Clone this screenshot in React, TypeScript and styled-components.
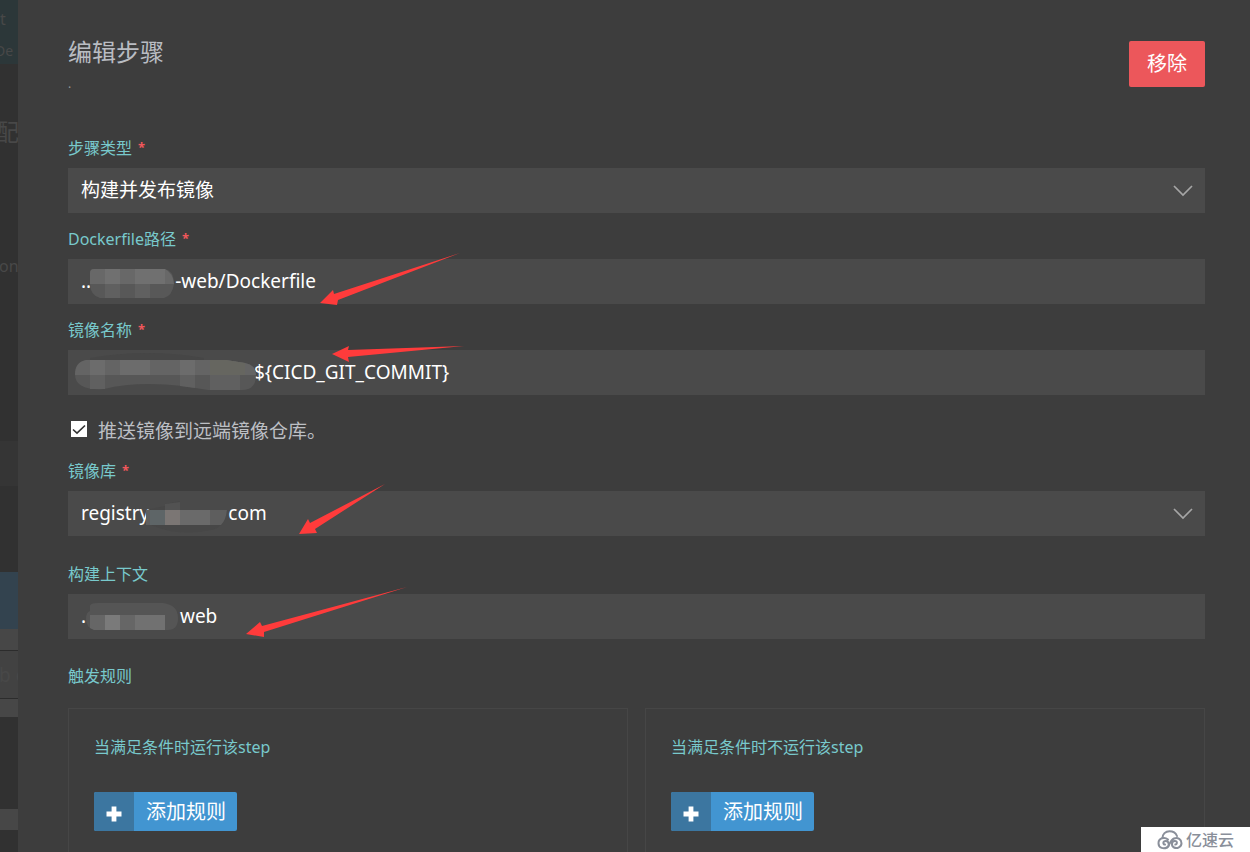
import React from "react";
import styled, { createGlobalStyle } from "styled-components";

const GlobalStyle = createGlobalStyle`
  *, *::before, *::after { box-sizing: border-box; }
  body {
    margin: 0;
    background: #313131;
    color: #fff;
    font-family: "Noto Sans", "Noto Sans CJK SC", sans-serif;
    font-size: 19px;
  }
  button, input, select { font: inherit; color: inherit; }
`;

const Page = styled.div`
  display: flex;
  height: 100vh;
  overflow: hidden;
`;

/* The dimmed page that stays visible beside the drawer */
const Underlay = styled.div`
  flex: 0 0 18px;
  display: flex;
  flex-direction: column;
  overflow: hidden;
  white-space: nowrap;
  background: #313131;
  color: #484848;
`;

const Strip = styled.div<{ $height: number; $tone?: string; $size?: number; $pull?: number; $ruled?: boolean }>`
  flex: 0 0 ${(p) => p.$height}px;
  display: flex;
  align-items: center;
  background: ${(p) => p.$tone ?? "transparent"};
  font-size: ${(p) => p.$size ?? 16}px;
  line-height: 24px;
  text-indent: ${(p) => -(p.$pull ?? 0)}px;
  border-bottom: ${(p) => (p.$ruled ? "1px solid #2c2c2c" : "0")};
`;

const Drawer = styled.main`
  flex: 1;
  min-width: 0;
  padding: 36px 45px 0 50px;
  background: #3d3d3d;
`;

const Header = styled.header`
  display: flex;
  justify-content: space-between;
  align-items: flex-start;
  height: 102px;
`;

const Title = styled.h1`
  margin: 0;
  color: #b9bcc2;
  font-size: 24px;
  font-weight: 400;
  line-height: 32px;
`;

const Subtitle = styled.p`
  margin: 4px 0 0;
  color: #999;
  font-size: 12px;
  line-height: 24px;
`;

const RemoveButton = styled.button`
  margin-top: 5px;
  width: 76px;
  height: 46px;
  padding: 0 0 4px;
  border: 0;
  border-radius: 2px;
  background: #ec575b;
  font-size: 20px;
`;

const Group = styled.div<{ $after?: number }>`
  display: flex;
  flex-direction: column;
  gap: 10px;
  margin-bottom: ${(p) => p.$after ?? 16}px;
`;

const Label = styled.label`
  align-self: flex-start;
  color: #78c9cc;
  font-size: 16px;
  line-height: 20px;
`;

const Required = styled.span`
  display: inline-block;
  margin-left: 6px;
  color: #f0575b;
  font-size: 13px;
  font-weight: 700;
  line-height: 18px;
  vertical-align: top;
`;

const Field = styled.div`
  position: relative;
  height: 45px;
  background: #4a4a4a;
`;

const TextInput = styled.input`
  display: block;
  width: 100%;
  height: 100%;
  padding: 0 13px 2px;
  border: 0;
  outline: 0;
  background: transparent;
`;

const Select = styled.select`
  appearance: none;
  display: block;
  width: 100%;
  height: 100%;
  padding: 0 48px 1px 13px;
  border: 0;
  outline: 0;
  background: transparent;
`;

const Chevron = styled.svg`
  position: absolute;
  top: 16px;
  right: 12px;
  pointer-events: none;
`;

const Marks = styled.svg`
  position: absolute;
  top: -10px;
  left: 0;
  overflow: visible;
  pointer-events: none;
`;

const CheckRow = styled.label`
  display: flex;
  align-items: center;
  gap: 11px;
  margin: 24px 0 18px 3px;
  color: #bcbfc4;
  line-height: 24px;
`;

const CheckBox = styled.input`
  appearance: none;
  width: 16px;
  height: 16px;
  margin: 0 0 4px;
  background: #fff
    url("data:image/svg+xml,%3Csvg xmlns='http://www.w3.org/2000/svg' viewBox='0 0 16 16'%3E%3Cpath d='M2 8.5 6 12.2 14 4.5' fill='none' stroke='%23333' stroke-width='1.6'/%3E%3C/svg%3E");
`;

const SectionTitle = styled.h2`
  margin: 0 0 22px;
  color: #78c9cc;
  font-size: 16px;
  font-weight: 400;
  line-height: 20px;
`;

const Rules = styled.div`
  display: grid;
  grid-template-columns: 1fr 1fr;
  gap: 17px;
`;

const RuleCard = styled.section`
  min-height: 190px;
  padding: 28px 25px;
  border: 1px solid #464646;
`;

const RuleTitle = styled.h3`
  margin: 0 0 35px;
  color: #78c9cc;
  font-size: 16px;
  font-weight: 400;
  line-height: 20px;
`;

const AddButton = styled.button`
  display: flex;
  height: 39px;
  padding: 0;
  overflow: hidden;
  border: 0;
  border-radius: 2px;
  background: #4295d1;
  font-size: 20px;
  line-height: 39px;
`;

const AddIcon = styled.span`
  display: flex;
  align-items: center;
  justify-content: center;
  width: 40px;
  height: 39px;
  padding-top: 5px;
  background: #3c76a0;
`;

const AddText = styled.span`
  padding: 0 11px 0 12px;
`;

const Brand = styled.aside`
  position: fixed;
  right: 0;
  bottom: 0;
  display: flex;
  align-items: center;
  justify-content: center;
  gap: 3px;
  width: 109px;
  height: 25px;
  background: #fff;
  color: #8a8f9a;
  font-size: 16px;
  font-weight: 500;
  line-height: 24px;
`;

const gap = (n: number) => "\u00a0".repeat(n);

const Arrow = ({ d }: { d: string }) => <path d={d} fill="#ff3b3b" />;

function DropIcon() {
  return (
    <Chevron width="20" height="14" viewBox="0 0 20 14" fill="none" stroke="#a6a6a6" strokeWidth="1.7">
      <path d="M1 2 10 11 19 2" />
    </Chevron>
  );
}

type FieldProps = {
  id: string;
  label: string;
  required?: boolean;
  after?: number;
  children: React.ReactNode;
};

function FormGroup({ id, label, required, after, children }: FieldProps) {
  return (
    <Group $after={after}>
      <Label htmlFor={id}>
        {label}
        {required && <Required>*</Required>}
      </Label>
      <Field>{children}</Field>
    </Group>
  );
}

function Rule({ title }: { title: string }) {
  return (
    <RuleCard>
      <RuleTitle>{title}</RuleTitle>
      <AddButton type="button">
        <AddIcon>
          <svg width="16" height="16" viewBox="0 0 16 16" fill="#fff">
            <path d="M5.6.5h4.8v5.1h5.1v4.8h-5.1v5.1H5.6v-5.1H.5V5.6h5.1z" />
          </svg>
        </AddIcon>
        <AddText>添加规则</AddText>
      </AddButton>
    </RuleCard>
  );
}

export default function App() {
  return (
    <>
      <GlobalStyle />
      <Page>
        <Underlay aria-hidden="true">
          <Strip $height={37} $tone="#2c3739">t</Strip>
          <Strip $height={27} $tone="#2c3739" $size={14} $pull={5}>De</Strip>
          <Strip $height={50} />
          <Strip $height={36} $size={24} $pull={5}>配</Strip>
          <Strip $height={104} />
          <Strip $height={24} $pull={1}>on</Strip>
          <Strip $height={163} />
          <Strip $height={45} $tone="#353535" />
          <Strip $height={86} />
          <Strip $height={57} $tone="#33434f" />
          <Strip $height={22} $tone="#474747" $ruled />
          <Strip $height={48} $tone="#424242" $size={19} $pull={1} $ruled>b c</Strip>
          <Strip $height={18} $tone="#474747" />
          <Strip $height={92} />
          <Strip $height={21} $tone="#474747" />
        </Underlay>

        <Drawer>
          <Header>
            <div>
              <Title>编辑步骤</Title>
              <Subtitle>.</Subtitle>
            </div>
            <RemoveButton type="button">移除</RemoveButton>
          </Header>

          <form>
            <FormGroup id="type" label="步骤类型" required>
              <Select id="type">
                <option>构建并发布镜像</option>
              </Select>
              <DropIcon />
            </FormGroup>

            <FormGroup id="dockerfile" label="Dockerfile路径" required>
              <TextInput id="dockerfile" defaultValue={`..${gap(17)}-web/Dockerfile`} />
              <Marks width="400" height="60">
                <path d="M26 20H97Q106 22 106 35 104 47 96 49H32Q22 46 22 35V24Q22 20 26 20Z" fill="#585858" />
                <path d="M22 24q0-4 4-4h71q8 4 9 15H22z" fill="#686868" />
                <path d="M37 20h15v15H37zM67 20h30v15H67z" fill="#707070" />
                <path d="M37 35h15v14H37zM67 35h15v14H67z" fill="#606060" />
                <Arrow d="M252 54 265 41 266 45 392 4 270 51 269 56Z" />
              </Marks>
            </FormGroup>

            <FormGroup id="image" label="镜像名称" required after={0}>
              <TextInput id="image" defaultValue={`${gap(35)}\${CICD_GIT_COMMIT}`} />
              <Marks width="400" height="60">
                <path d="M22 18Q80 8 136 18V44Q80 36 22 46Z" fill="#464646" />
                <path d="M18 20H158L177 23Q188 25 188 35 188 50 174 50H140L115 46Q68 41 36 49 7 51 7 34 7 22 18 20Z" fill="#575757" />
                <path d="M18 20H158L177 23Q188 25 188 35H7Q7 22 18 20Z" fill="#646464" />
                <path d="M22 20h15v15H22zM52 20h30v15H52zM112 20h15v15h-15z" fill="#6c6c6c" />
                <path d="M142 20h16l19 3v12h-35z" fill="#666660" />
                <path d="M22 35h15v14H22zM112 35h15v13l-15-2zM142 35h30v15h-30z" fill="#606060" />
                <Arrow d="M264 14 281 6 280 10 396 6 280 17 281 22Z" />
              </Marks>
            </FormGroup>

            <CheckRow>
              <CheckBox type="checkbox" defaultChecked />
              推送镜像到远端镜像仓库。
            </CheckRow>

            <FormGroup id="registry" label="镜像库" required after={28}>
              <Select id="registry">
                <option>{`registry${gap(16)}com`}</option>
              </Select>
              <Marks width="400" height="60">
                <path d="M78 29 97 25V23L112 20V29H159Q158 46 143 49 110 56 83 44Z" fill="#474747" />
                <path d="M97 25V23L112 21V29H97Z" fill="#525252" />
                <path d="M78 29H159Q158 39 153 44H78Z" fill="#5e5e5e" />
                <path d="M82 29h15v15H82z" fill="#5e6567" />
                <path d="M97 29h15v15H97z" fill="#7b7674" />
                <path d="M112 29h30v15h-30z" fill="#6a6a6a" />
                <Arrow d="M231 53 240 38 242 42 317 3 247 48 249 52Z" />
              </Marks>
              <DropIcon />
            </FormGroup>

            <FormGroup id="context" label="构建上下文" after={27}>
              <TextInput id="context" defaultValue={`.${gap(19)}web`} />
              <Marks width="400" height="60">
                <path d="M22 22q0-3 8-3h65q15 2 15 15 0 12-10 12H28q-10-1-10-11 0-7 4-8z" fill="#555" />
                <path d="M22 31h75v15H26l-4-2z" fill="#666" />
                <path d="M37 31h15v15H37z" fill="#7a7a7a" />
                <path d="M67 31h30v15H67z" fill="#717171" />
                <Arrow d="M178 50 192 38 194 42 339 3 196 48 196 53Z" />
              </Marks>
            </FormGroup>

            <SectionTitle>触发规则</SectionTitle>
            <Rules>
              <Rule title="当满足条件时运行该step" />
              <Rule title="当满足条件时不运行该step" />
            </Rules>
          </form>
        </Drawer>
      </Page>

      <Brand>
        <svg width="26" height="20" viewBox="0 0 26 20" fill="none" stroke="#8a8f9a" strokeWidth="2" strokeLinecap="round">
          <path d="M5.500 8C5.500 4 8.500 1.200 12.500 1.200S19 3.500 20 6" />
          <path d="M11 9.500C7.500 6.500 1.500 8 1.500 13.200S7 19 10 17.500 12 11 8.800 11 5.800 14.500 8 14.600" />
          <path d="M10 17.500C12.500 16 13 10 17 8.500S24.500 9.500 24.500 13.200 20 19 17 17.500 14.500 11.500 17.500 11 20.500 14.500 18.300 14.600" />
        </svg>
        亿速云
      </Brand>
    </>
  );
}
